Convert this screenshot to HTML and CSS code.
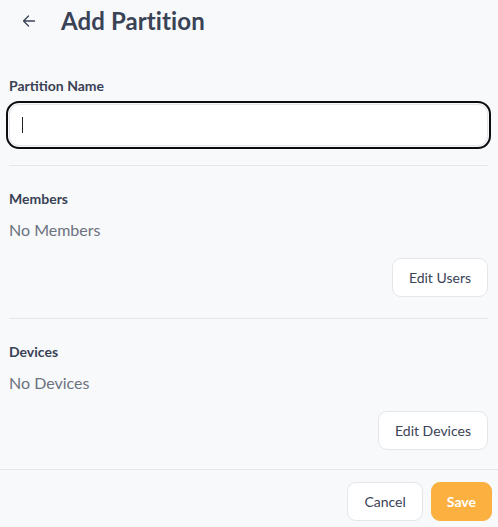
FILE: index.html
```html
<!DOCTYPE html>
<html lang="en">
<head>
<meta charset="utf-8">
<title>Add Partition</title>
<link rel="stylesheet" href="styles.css">
</head>
<body>
<div class="page">
  <header class="header">
    <button class="back" aria-label="Back">
      <svg width="14" height="14" viewBox="0 0 14 14" fill="none" stroke="currentColor" stroke-width="1.3" stroke-linecap="round" stroke-linejoin="round">
        <path d="M12.5 7H1.5M6.5 2L1.5 7l5 5"/>
      </svg>
    </button>
    <h1 class="title">Add Partition</h1>
  </header>

  <div class="content">
    <label class="label first">Partition Name</label>
    <div class="input" role="textbox" aria-label="Partition Name"><span class="caret"></span></div>

    <hr class="divider">

    <section class="section">
      <div class="label">Members</div>
      <div class="empty">No Members</div>
      <div class="actions"><button class="btn">Edit Users</button></div>
    </section>

    <hr class="divider">

    <section class="section">
      <div class="label">Devices</div>
      <div class="empty">No Devices</div>
      <div class="actions"><button class="btn">Edit Devices</button></div>
    </section>
  </div>

  <footer class="footer">
    <button class="btn">Cancel</button>
    <button class="btn primary">Save</button>
  </footer>
</div>
</body>
</html>
```

FILE: styles.css
```css
* { box-sizing: border-box; }
html, body {
  margin: 0;
  background: #f8f9fb;
}
body {
  font-family: Lato, "Noto Sans", sans-serif;
  color: #3a4256;
}
.page {
  width: 498px;
  height: 527px;
  display: flex;
  flex-direction: column;
}
.header {
  display: flex;
  align-items: center;
  padding: 7px 0 0 22px;
  gap: 25px;
}
.back {
  display: flex;
  padding: 0;
  border: 0;
  background: none;
  color: #3a4256;
  width: 14px;
  height: 14px;
}
.title {
  margin: 0;
  font-size: 24px;
  line-height: 28px;
  font-weight: 700;
  color: #3a4256;
  letter-spacing: 0.1px;
}
.content {
  padding: 0 10px 0 9px;
  display: flex;
  flex-direction: column;
}
.label {
  display: block;
  font-size: 14px;
  line-height: 17px;
  font-weight: 700;
  color: #3a4256;
}
.label.first {
  margin-top: 42px;
}
.input {
  margin-top: 10px;
  height: 42px;
  background: #fff;
  border: 1px solid #e3e5ea;
  border-radius: 10px;
  outline: 2px solid #0c0d10;
  outline-offset: 1px;
  display: flex;
  align-items: center;
  padding-left: 12px;
}
.caret {
  width: 1px;
  height: 16px;
  background: #222;
}
.divider {
  margin: 19px 0 0;
  border: 0;
  border-top: 1px solid #e4e6ea;
  height: 0;
}
.section {
  padding-top: 24px;
  display: flex;
  flex-direction: column;
}
.empty {
  margin-top: 13px;
  font-size: 16px;
  line-height: 20px;
  color: #6b7280;
}
.actions {
  margin-top: 18px;
  display: flex;
  justify-content: flex-end;
  margin-bottom: 2px;
}
.btn {
  height: 39px;
  padding: 0 16px;
  background: #fff;
  border: 1px solid #e4e6ea;
  border-radius: 9px;
  font-family: Lato, "Noto Sans", sans-serif;
  font-size: 14px;
  color: #3a4256;
}
.footer {
  margin-top: 17px;
  border-top: 1px solid #e4e6ea;
  display: flex;
  justify-content: flex-end;
  gap: 8px;
  padding: 12px 6px 0 0;
}
.btn.primary {
  padding: 0 15px;
  background: #fbb040;
  border-color: #fbb040;
  color: #fff;
  font-weight: 700;
}
```
